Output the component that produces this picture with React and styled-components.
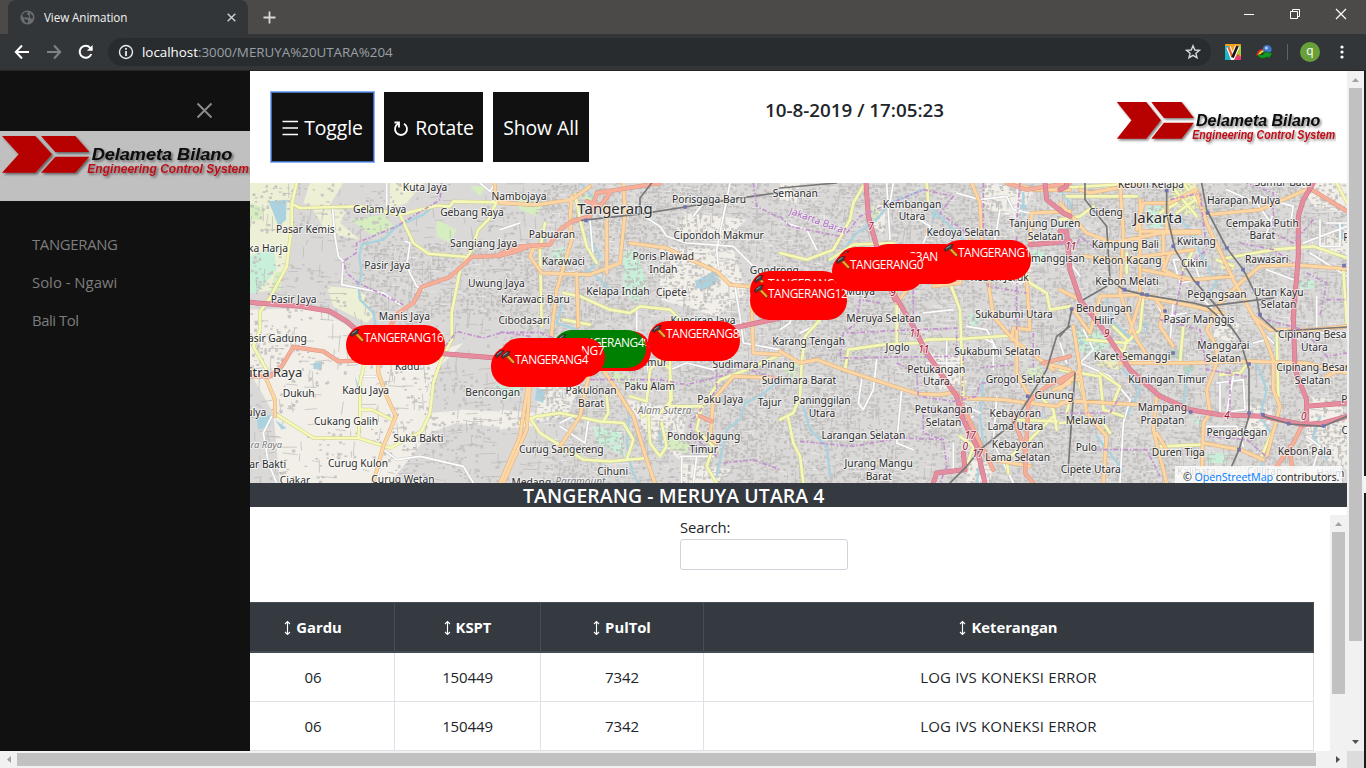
import React from "react";
import styled, { createGlobalStyle, css } from "styled-components";

const UI = '"Open Sans", "Noto Sans", sans-serif';

const Global = createGlobalStyle`
  * { box-sizing: border-box; }
  html, body { margin: 0; height: 100%; overflow: hidden; background: #1c1c1c; }
  body { font-family: ${UI}; color: #212529; }
`;

/* ---------- browser chrome ---------- */
const Window = styled.div`
  width: 1366px; height: 768px; display: flex; flex-direction: column; overflow: hidden;
`;
const TabStrip = styled.div`
  height: 34px; flex: none; background: #4c4a48; display: flex; align-items: stretch; padding-left: 8px;
`;
const Tab = styled.div`
  width: 240px; background: #323639; border-radius: 8px 8px 0 0; display: flex; align-items: center;
  padding: 0 12px 0 12px; color: #f1f1f1; font-size: 11.7px; letter-spacing: -0.1px;
  svg { flex: none; }
`;
const TabTitle = styled.span` flex: 1; padding-left: 9px; white-space: nowrap; margin-top: -1px; `;
const NewTab = styled.div` display: flex; align-items: center; padding-left: 15px; `;
const WindowButtons = styled.div`
  margin-left: auto; display: flex; align-items: center; gap: 34px; padding: 0 19px 6px 0;
`;
const Toolbar = styled.div`
  height: 37px; flex: none; background: #323639; border-bottom: 1px solid #2a2223;
  display: flex; align-items: center; padding: 0 17px 0 14px;
`;
const NavButtons = styled.div` display: flex; gap: 16px; width: 94px; `;
const AddressBar = styled.div`
  width: 1103px; height: 28px; border-radius: 14px; background: #282c2f; display: flex; align-items: center;
  padding: 0 10px; font-size: 13.4px; color: #9aa0a6; white-space: nowrap;
`;
const Url = styled.span`
  flex: 1; padding-left: 8px; letter-spacing: -0.02px;
  b { color: #fff; font-weight: 400; }
`;
const Extensions = styled.div` display: flex; align-items: center; margin-left: 14px; `;
const Divider = styled.i` width: 1px; height: 16px; background: #5f6368; margin: 0 12px 0 14px; `;
const Avatar = styled.div`
  width: 20px; height: 20px; border-radius: 50%; background: #689f38; color: #fff; font-size: 12px;
  line-height: 17px; text-align: center; margin-right: 20px;
`;

/* ---------- page ---------- */
const Viewport = styled.div` flex: 1; min-height: 0; display: flex; `;
const PageColumn = styled.div` width: 1347px; display: flex; flex-direction: column; `;
const Page = styled.div` height: 680px; display: flex; background: #fff; `;
const Sidebar = styled.nav` width: 250px; background: #111; color: #818181; `;
const CloseRow = styled.div`
  height: 60px; display: flex; justify-content: flex-end; align-items: flex-end; padding: 0 37px 12px 0;
`;
const LogoPanel = styled.div` height: 70px; background: #c0c0c0; `;
const SideLinks = styled.div` padding: 24px 0 0 32px; `;
const SideLink = styled.div`
  height: 38px; line-height: 38px; font-size: 14.9px; letter-spacing: ${p => p.$ls || 0}px; color: #7d7d7d;
`;
const Main = styled.main` width: 1097px; display: flex; flex-direction: column; overflow: hidden; `;
const Header = styled.header`
  height: 112px; flex: none; display: flex; align-items: flex-start; padding: 21px 0 0 21px;
`;
const HeaderButton = styled.button`
  height: 70px; width: ${p => p.$w}px; margin: 0 ${p => p.$gap || 0}px 0 0; padding: 1px 0 0; border: 0; background: #111; color: #fff;
  font: 400 19.4px ${UI}; display: flex; align-items: center; justify-content: center; gap: 5px;
  letter-spacing: -0.1px; white-space: nowrap;
  ${p => p.$focused && css`box-shadow: 0 0 0 1px #8fb0ee, inset 0 0 0 1px #3f6cb8; outline: none;`}
`;
const Clock = styled.div`
  margin-left: 176px; width: 350px; padding-top: 4px; font-size: 18.8px; line-height: 28px; font-weight: 600; white-space: nowrap;
`;
const HeaderLogo = styled.div` padding-top: 5px; `;
const MapArea = styled.section` position: relative; height: 300px; flex: none; overflow: hidden; background: #dcdad8; `;
const Pill = styled.div`
  position: absolute; left: ${p => p.$x - 250}px; top: ${p => p.$y - 183}px; width: ${p => p.$w}px; height: ${p => p.$h || 40}px;
  border-radius: 20px; background: ${p => p.$color || "#f00"}; color: #fff; font-size: 11.9px; line-height: 15px; letter-spacing: -0.45px;
  white-space: nowrap; display: flex; padding: 5px 0 0 4px;
  svg { flex: none; margin-top: -1px; }
`;
const Attribution = styled.div`
  position: absolute; right: 5px; bottom: 0; height: 17px; width: 167px; padding: 3px 0 0 8px; background: rgba(255,255,255,.8);
  font-size: 10.7px; line-height: 16px; white-space: nowrap; color: #222; letter-spacing: -0.07px;
  a { color: #007bff; }
`;
const StationTitle = styled.h4`
  margin: 0; height: 24px; flex: none; background: #343a40; color: #fff; font-size: 19.4px; font-weight: 600; line-height: 26px;
  padding-left: 273px; white-space: nowrap; letter-spacing: 0.1px;
`;
const TableArea = styled.section` flex: 1; min-height: 0; margin-top: 8px; display: flex; `;
const TableScroll = styled.div` width: 1080px; overflow: hidden; `;
const SearchBlock = styled.label`
  display: block; width: 168px; height: 87px; margin-left: 430px; font-size: 14.8px; line-height: 24px; letter-spacing: -0.05px;
`;
const SearchInput = styled.input`
  display: block; width: 168px; height: 31px; border: 1px solid #ced4da; border-radius: 3px; background: #fff;
`;
const Row = styled.div`
  width: 1064px; display: grid; grid-template-columns: 145px 146px 163px 610px; font-size: 15px;
`;
const HeadRow = styled(Row)` font-weight: 700; color: #fff; background: #343a40; font-size: 14.8px; `;
const Cell = styled.div`
  height: 49px; border-right: 1px solid #dee2e6; border-bottom: 1px solid #dee2e6; text-align: center; line-height: 48px;
  letter-spacing: -0.12px;
  &:first-child { padding-right: 18px; }
  &:last-child { letter-spacing: 0.15px; }
`;
const HeadCell = styled.div`
  height: 51px; border: solid #454d55; border-width: 1px 1px 2px 0; display: flex; align-items: center; justify-content: center; gap: 5px;
  &:first-child { padding-right: 18px; }
`;

/* ---------- scrollbars ---------- */
const VScroll = styled.div`
  width: 17px; background: #f1f1f1; display: flex; flex-direction: column; align-items: center; flex: none;
  height: ${p => p.$h}px;
`;
const VThumb = styled.div` width: 13px; height: ${p => p.$h}px; background: #c1c1c1; margin-bottom: auto; `;
const HScroll = styled.div` height: 17px; background: #f1f1f1; display: flex; align-items: center; `;
const HThumb = styled.div` width: 1299px; height: 13px; background: #c1c1c1; margin-right: auto; `;
const RightColumn = styled.div` width: 17px; `;
const Corner = styled.div` height: 17px; background: #dcdcdc; `;
const Edge = styled.div` width: 2px; background: linear-gradient(#1b1b1b 405px, #f4f4f4 405px 422px, #1b1b1b 422px); `;

const Arrow = ({ dir, color }) => (
  <svg width="17" height="17" viewBox="0 0 17 17">
    <path d="M5 11 L8.5 7 L12 11Z" fill={color} transform={`rotate(${dir} 8.5 8.5)`} />
  </svg>
);

const Logo = ({ w }) => (
  <svg width={w} height="70" viewBox="0 0 750 210" preserveAspectRatio="none" style={{ display: "block" }}>
    <defs>
      <filter id={"sh" + w} x="-5%" y="-10%" width="115%" height="140%">
        <feDropShadow dx="5" dy="5" stdDeviation="3.5" floodColor="#000" floodOpacity=".5" />
      </filter>
    </defs>
    <g filter={`url(#sh${w})`}>
      <path fill="#b70000" d="M6 15H106L156 70L106 125H6L56 70Z M123 15H226L268 63H166Z M166 77H268L226 125H123Z" />
      <g fontFamily='"Liberation Sans", Arial, sans-serif' fontWeight="700" fontStyle="italic">
        <text x="275" y="86" fontSize="48" textLength="422" lengthAdjust="spacingAndGlyphs" fill="#080808">Delameta Bilano</text>
        <text x="262" y="125" fontSize="36" textLength="485" lengthAdjust="spacingAndGlyphs" fill="#bd1118">Engineering Control System</text>
      </g>
    </g>
  </svg>
);

const Hammer = () => (
  <svg width="14" height="14" viewBox="0 0 14 14">
    <path d="M6 4.5L12.3 11.2" stroke="#7a4a10" strokeWidth="3.4" strokeLinecap="round" />
    <path d="M6 4.5L12.2 11" stroke="#f6a52e" strokeWidth="2.1" strokeLinecap="round" />
    <path d="M.4 6.6L1.4 4L6 .6H9.2L7.8 2.6L8.2 4L6.2 5.6L4.6 4.8L2.4 7.6Z" fill="#3e4346" stroke="#1a1a1a" strokeWidth=".5" />
    <path d="M2.2 4.4L6.4 1.5" stroke="#9fa9ad" strokeWidth=".9" />
  </svg>
);

const SortArrow = () => (
  <svg width="7" height="15" viewBox="0 0 7 15" fill="none" stroke="#fff" strokeWidth="1.1">
    <path d="M3.5 1.5V14.5M1 4L3.5 1.5L6 4M1 12L3.5 14.5L6 12" />
  </svg>
);

/* ---------- map ---------- */
/* Each sheet is drawn at triple scale and placed at its own horizontal offset. */
const SHEETS = [
  {
    dx: 0,
    land: [
      ["#f2efe9", "M0 380L200 375L330 450L520 520L640 480L560 560L540 690L640 680L850 690L850 730L780 735L620 720L540 750L420 900H90L70 690L0 570Z"],
      ["#eef0d5", "M0 0H135L120 180L90 320L0 330ZM180 0H280L230 80L160 60ZM420 0H520L470 60L420 80ZM230 310L340 320L370 400L350 420L250 370ZM190 80H290L270 120L330 170L230 150Z"],
      ["#d6edc0", "M0 60L40 75L30 110H0ZM300 110L400 95L430 130L370 160ZM560 110L620 140L600 180L560 160ZM75 270L100 265L90 320L60 330ZM660 10H710L690 40Z"],
      ["#c8f0d8", "M0 220L70 190L80 260L20 330H0ZM730 610L800 590L820 620L770 650Z"],
      ["#aad3df", "M55 55L110 50L108 110L85 130L70 90ZM190 540L215 535L215 560L190 558ZM20 705L65 695L60 730L25 740ZM75 710L110 735L95 740ZM315 580L330 620L322 625Z"],
    ],
    lines: [
      ["b", "M560 60L520 95L440 130L400 170L335 185L328 220L335 270L325 310L330 350L370 390L380 440"],
      ["p", "M575 0L570 50L440 130L320 180L318 210L280 235L290 270L325 300L460 365"],
      ["p", "M585 490L620 445L700 465L760 448L840 460"],
      ["w", "M248 80L255 160L265 220L280 235L275 305L400 330L450 365M410 0V70M690 0L720 25L735 0M466 175L480 180L470 250L500 310L520 320M330 580H375M400 800L440 830L510 820L640 850L670 900M65 700L40 750L55 840L80 900M375 900L390 860"],
      ["y", "M140 0L125 65L125 130L110 250L60 345L30 385L30 440L10 490L50 560M130 65L150 75L330 70L450 95L560 68L600 70L610 55L740 58M450 95L490 180L535 212L650 222M740 55L715 110L685 140L665 200L630 260L605 390L605 470L570 540L550 600L540 690L515 745L420 795L325 765L190 765L80 695M343 540L330 600V690L325 765M335 680H365L430 712"],
      ["o", "M735 0V30L750 58L840 65M385 540V570L410 640L438 700L400 790L370 900M50 590L75 650V700M840 600L830 740L760 900"],
      ["r", "M840 188L800 205L750 218L665 222L600 282L515 312L490 360L445 390L420 430M0 580H60L95 550L130 492L220 505L265 535L330 533"],
      ["m", "M0 358L150 370L240 385L290 415L330 450L420 500L590 513L740 525"],
    ],
    labels: [
      ["Kuta Jaya", 524, 14], ["Nambojaya", 806, 41], ["Gelam Jaya", 388, 78], ["Gebang Raya", 665, 87], ["Pasar Kemis", 165, 139],
      ["ka Harja", 53, 195], ["Pasir Jaya", 411, 246], ["Sangiang Jaya", 700, 180], ["Uwung Jaya", 738, 301], ["Karawaci Baru", 855, 350],
      ["Cibodasari", 821, 412], ["Pasir Jaya", 130, 349], ["Manis Jaya", 462, 401], ["Pasir Gadung", 72, 467], ["itra Raya", 76, 569, 39],
      ["Dukuh", 145, 632], ["Kadu", 471, 549], ["Kadu Jaya", 346, 623], ["ulya", 18, 687], ["Cukang Galih", 287, 716], ["ra Raya", 48, 784, 28, "i"],
      ["Suka Bakti", 504, 767], ["Curug Kulon", 323, 840], ["ar Bakti", 52, 843], ["Ciakar", 134, 893], ["Curug Wetan", 458, 890], ["Bencongan", 727, 627],
    ],
  },
  {
    dx: 250,
    land: [
      ["#f2efe9", "M120 590L240 600L200 700L0 740V680L110 690ZM480 190L700 200L740 330L650 400L480 350ZM560 90L740 110L660 180L520 150ZM380 650L560 680L540 830L440 750ZM540 840L700 860L650 900H540Z"],
      ["#c8f0d8", "M160 200L190 190L210 225L180 250L155 230ZM370 210L410 200L440 300L410 360L370 330ZM280 730L360 740L375 820L290 780Z"],
      ["#d6edc0", "M50 40L130 60L110 100L60 80ZM240 40L290 30L280 70ZM500 760L570 780L560 810L510 800ZM330 560L420 590L400 620L340 590ZM120 460L170 470L160 520Z"],
      ["#aad3df", "M585 295L640 265L660 280L645 305L610 320L590 315ZM110 615L135 620L130 660L105 650ZM475 740L490 740L485 800L475 795ZM210 700L240 690L240 715Z"],
    ],
    lines: [
      ["b", "M240 0L285 50L275 100L270 170L300 220L270 260L230 290M165 330L185 370L170 420L230 440M280 270L340 330M390 680L380 780L395 860L415 900M840 590L780 640L735 660L720 710L680 740L650 880"],
      ["p", "M760 0L770 70L840 105M270 590L480 590L560 605L680 575L700 545L840 590M0 448H120L160 465M650 540L650 620L570 720L580 760L650 820M670 840L760 830L840 860"],
      ["w", "M270 110L280 230M0 140L60 120M440 105L480 130L500 160L560 180L700 190L760 250M690 0L650 200L655 250M705 310L720 400L730 480L840 500M410 370V440M430 470L450 600L430 700M180 720L220 700L265 710L255 780L180 730M510 560L560 540L640 560L700 510M540 820H640M545 820V900M590 820L580 900M610 60L580 100M375 0V50"],
      ["y", "M135 120L120 200L125 430M225 35L235 80L240 110L260 190L290 240M190 330L240 340L330 380L390 390L420 370L510 380L560 430M60 720L110 700L180 690L300 715L370 720L400 770L380 830M90 705L120 750L250 830L330 835L440 825M320 640L325 690L310 715M390 640L440 655L450 560L480 530L510 560L515 650L480 690M425 700L445 690L450 780L480 820L500 790L485 720M510 530V670L605 670L590 740L640 790L620 850L650 900M590 700L660 590L740 560L830 520M190 410L270 425"],
      ["o", "M0 60L110 65L215 50L270 10M370 0L375 90L360 240L270 275L125 270L90 220L100 195L130 190M215 40L210 110L215 170L170 320L155 450L150 560M320 70L320 270M390 180L500 195L560 225L650 265L690 305L840 320M230 270L235 430M280 520L330 590L400 700L440 830L465 900M0 900L60 760L85 600M270 560L240 700L180 790M755 370L760 510L840 515M840 585L700 580L640 650L630 770L650 780"],
      ["r", "M0 213L60 190L150 185L180 140L215 115L270 100L290 30L480 0M330 30L300 70L260 55M600 700L635 715"],
      ["m", "M700 435L840 405L940 345"],
      ["t", "M245 112L430 92L555 72L690 50L840 28M455 0L420 45V95"],
      ["s", "M258 112h.1M555 72h.1"],
    ],
    labels: [
      ["Tangerang", 344, 78, 45], ["Porisgaga Baru", 626, 48], ["Pabuaran", 155, 154], ["Cipondoh Makmur", 655, 158], ["Karawaci", 189, 234],
      ["Poris Plawad", 489, 220], ["Indah", 489, 259], ["Kelapa Indah", 353, 325], ["Cipete", 513, 329], ["Kunciran Jaya", 608, 413],
      ["Gondrong", 822, 262], ["Sudimara Pinang", 760, 545], ["Paku Alam", 448, 611], ["Paku Jaya", 660, 650], ["Alam Sutera", 493, 682, 30, "i"],
      ["Pakulonan", 272, 623], ["Barat", 272, 661], ["Pondok Jagung", 610, 760], ["Timur", 610, 798], ["Timur", 458, 537], ["Curug Sangereng", 183, 798],
      ["Cihuni", 337, 864], ["Medang", 93, 898], ["Paramount", 240, 896, 30, "i"], ["Sudimara Barat", 896, 591], ["Tajur", 808, 657],
      ["Karang Tengah", 925, 475], ["Semanan", 885, 31],
    ],
  },
  {
    dx: 530,
    land: [
      ["#f2efe9", "M0 0H60L50 60L0 50ZM280 60L320 70L310 150L280 130ZM640 210L760 230L740 310L640 290ZM440 510L540 520L560 600L480 620ZM620 0L760 20L720 110L600 70ZM560 830L640 840L630 900H560Z"],
      ["#c8f0d8", "M565 395L590 390L600 425L570 430ZM760 200L800 210L790 245L750 235Z"],
      ["#d6edc0", "M275 70L300 75L290 120L280 115ZM740 560L780 550L800 590L750 600ZM420 480L450 520L420 530ZM0 550L60 530L40 590Z"],
      ["#aad3df", "M720 65H740L738 90H722ZM770 100L800 110L790 125ZM455 85L470 90L465 110L455 105Z"],
    ],
    lines: [
      ["b", "M440 0L450 70L500 120L560 180M430 20L330 60L290 110L230 150L190 200L150 240M610 590L600 700L610 780L590 900M70 670L90 740L140 790L150 880M730 30V100M400 290L330 310"],
      ["p", "M0 100L30 130L180 160M200 150L240 100L430 20L520 40L480 90L560 150M400 290V440L530 435V520L180 525L190 450L230 420L240 350L300 360M405 440L200 450M350 540L410 570L415 640L520 655L590 640L600 600L700 600M600 555L700 545M60 775L220 790L360 765L490 770L500 850L480 900M550 520L545 690L430 680L430 750L490 770M710 160V440M610 180L625 310L740 330M610 0V180M720 0L710 120M760 450V560M560 200L640 200"],
      ["w", "M20 120L80 140L110 200M320 0L330 170M340 0L330 60M60 280L30 420L0 440M290 530L280 620L250 680L235 660L245 590M130 340L120 420L60 450M360 340L350 480M430 390L520 380M365 620L350 780L400 800M500 470V560M560 430L620 440L660 520M600 460L640 480V560M440 540H540M540 660L600 690M580 700L540 720M520 780V860M650 640L640 780L700 900M400 100L450 130L430 180M660 80L640 200M530 30L600 50L680 40L700 80L750 90M0 360L100 360M380 200L340 180"],
      ["y", "M255 0L220 60L210 110L160 200L80 230L0 210M160 330L120 410L75 460L65 540L60 640L40 690L0 710M195 560L205 500L310 485L420 480L440 470L540 468L690 458M350 480V360M510 300L540 380L550 640M25 705L40 780L60 820L70 900M340 180L220 185L150 230M560 850L580 790L540 760M685 870L680 830L750 770L820 700M440 0L445 60M700 180L750 300L800 330L810 380L870 370M780 640L820 680L830 740M700 710L830 715M860 690L870 650"],
      ["o", "M575 0L600 60L605 160L625 300L640 400L700 470L780 530L820 560M570 170L540 300L460 310M0 505L60 540L110 530L190 560L280 590L410 632L480 635L510 630M530 645L670 650L740 660L830 670L870 650M740 290L750 440L700 435L695 470M330 200L350 360L380 320M750 180L755 90L870 85M710 440V570L760 660M790 540L870 560M700 0L760 20L870 20M640 830L750 850M820 620L870 600"],
      ["r", "M680 0L740 20L870 0M870 520L790 540M745 660L735 870L760 900M870 575L800 610L740 660M530 630L600 780L640 860M700 700L740 820"],
      ["m", "M258 0L265 100L290 190L340 330L400 430L440 510L530 640L545 700L590 790L615 900M550 810L555 860L470 870L460 900M795 0L800 50L850 90L870 100M750 185L870 175M320 290L345 350"],
      ["t", "M0 15L170 0M870 430L830 460L800 560L745 650L700 720L600 800L560 850L510 900"],
      ["s", "M743 640h.1"],
    ],
    labels: [
      ["Kembangan", 395, 63], ["Utara", 395, 101], ["Kedoya Selatan", 549, 147], ["Tanjung Duren", 793, 121], ["Selatan", 796, 159],
      ["Meruya Selatan", 310, 407], ["Mulya", 240, 325], ["Joglo", 352, 492], ["Sukabumi Utara", 701, 394], ["Sukabumi Selatan", 651, 506],
      ["Petukangan", 468, 558], ["Utara", 468, 596], ["Grogol Selatan", 723, 588], ["Gunung", 821, 638], ["Kebayoran", 705, 692],
      ["Lama Utara", 705, 730], ["Paninggilan", 125, 652], ["Utara", 125, 690], ["Petukangan", 490, 680], ["Selatan", 490, 718],
      ["Larangan Selatan", 249, 757], ["Kebayoran", 712, 784], ["Lama Selatan", 712, 822], ["Jurang Mangu", 295, 842], ["Barat", 295, 880],
      ["manggisan", 833, 226], ["Kebon Jeruk", 658, 283], ["7", 272, 131, 30, "n"], ["9", 338, 330, 30, "n"], ["11", 404, 452, 30, "n"],
      ["11", 430, 499, 30, "n"], ["17", 570, 757, 30, "n"], ["0", 555, 792, 30, "n"], ["17", 592, 812, 30, "n"],
    ],
  },
  {
    dx: 810,
    land: [
      ["#f2efe9", "M480 400L540 420L520 480L460 460ZM740 640L820 650L861 690V860L740 800ZM780 150L861 140V220L780 210ZM560 660L640 680L620 760L560 740ZM720 0H861V90L760 70Z"],
      ["#c8f0d8", "M262 70H320V135H262ZM45 440L100 430L150 480L110 520L50 500ZM705 300L760 290L765 315L720 322ZM390 705L430 715L425 735ZM440 810H500V840H440Z"],
      ["#eeeebb", "M330 0H410L420 70L380 100L340 60ZM110 520H190L180 560L110 550ZM480 235L525 240L520 265L485 262Z"],
      ["#b9d5c0", "M365 545L400 530L405 560L375 575ZM210 185L240 190L230 210ZM320 500H370V525H325Z"],
      ["#aad3df", "M830 125L850 120L850 170L835 165ZM250 415L265 420L262 450L250 445ZM60 470L75 478L66 490Z"],
    ],
    lines: [
      ["b", "M0 20L30 60L20 150M140 350L160 420L230 480M350 100L400 150L420 210L470 300L440 340M190 560L240 620L200 700M385 560L370 660M590 540L620 620L600 700L640 760L590 880M110 760L180 850L180 900M780 700L760 760L800 830"],
      ["p", "M0 180L50 190L60 160L110 200M330 50L420 30L440 200L370 260L340 420M540 180L640 200L700 240M300 410L420 440L440 560L560 580M620 410L730 440L800 520L860 510M0 690L150 690L180 640M100 800L260 800L300 880M510 560V690M760 110L700 180L640 150V30L560 0M740 270L800 300L780 400M440 760L560 770L630 830M800 350H861"],
      ["w", "M600 40L700 70L690 130M640 90L620 150M500 20L590 60L640 130M730 180L861 130M750 210L861 280M620 260L700 290M340 230H400L420 290L360 300ZM280 340L320 420M340 350L330 480M320 400L380 390M420 340L480 400L520 440M70 440L100 500L60 540L150 580L210 650L190 720L180 900M470 600L550 590L555 680L480 690L480 600M520 580L500 690M440 730L530 730L550 790M610 450L640 480M580 480L620 470M740 760L780 790L760 850M800 120H861M780 110V190H840V120M770 340V450H850M0 480L20 540M30 240L60 280"],
      ["y", "M0 15L250 0M20 40H230M330 50L420 30M340 15L410 100M350 90L420 40M370 0L430 80M300 90L350 60M0 110L60 100L100 70M500 225L640 200L760 190L861 225M520 250L470 230M250 340L240 440L200 480L80 470M370 430L360 540L230 540L170 490M60 570L120 580L130 680L190 700M120 570L180 610L160 660M0 720L90 710L130 720L150 750M830 0L861 60M850 260L861 430M640 740L600 830M300 790L430 785M200 210V270M400 200L370 260M160 430L200 470L190 510M480 575L540 570L560 545M650 450L655 640M0 560L50 570L70 640"],
      ["o", "M60 20L90 30L250 0M0 60L80 150L160 180L300 150L420 150M240 50V350L210 450M320 70V150M250 60H330L410 20M410 30L440 120L520 290L580 400L610 450L640 530L640 620L660 670L620 820M440 95L600 80L740 20M480 360L540 300L600 250L700 245L861 258M190 150L180 330L230 470L270 530M240 145H420M310 150V240M70 220L180 230L400 200M250 260L400 290L520 280M250 340L400 370L490 390M330 210L310 260L370 290M180 540L380 540L560 535L740 540L860 570M470 540L440 620L450 690L430 720L425 900M0 660L60 655L230 665M290 640L280 740L310 860L320 900M40 380L90 450L120 340L250 335M40 430L60 560L0 620M60 570L80 690L140 760L130 900M0 320L60 350M250 60L230 140M430 780L540 800L610 830M480 360L440 440L470 490V540M580 400L630 440L760 440L861 430M340 490L300 430L310 380L280 340M180 0L190 150M290 750L320 800M800 580L861 550M0 590H60"],
      ["r", "M755 20L861 85M730 720L700 780L650 850M690 790L700 900M0 600L40 570"],
      ["m", "M0 145L20 145L30 260L60 350L130 440L210 560L300 640L390 680L480 695L610 700L730 725L790 720L861 700M760 0L730 50L715 100L715 220L700 400L705 560L740 650V720M740 670L861 660M20 0V10L0 20"],
      ["t", "M75 0V50L140 130L150 290L190 320L250 335L400 360L440 370L640 345M440 370L520 440M320 20V90L345 200L400 290L470 370L540 470L567 560L567 700L537 800L515 850M425 0L440 80L500 195L550 260L590 340L600 400L650 445L861 432M70 350L140 310M0 460L25 430L35 380M45 570L25 850M610 700L690 723L790 730L861 700"],
      ["s", "M320 22h.1M443 90h.1M340 190h.1M501 195h.1M413 300h.1M549 260h.1M194 320h.1M246 333h.1M261 336h.1M315 384h.1M600 395h.1M339 510h.1M35 378h.1M567 543h.1M392 687h.1M567 690h.1M609 695h.1M686 722h.1M791 729h.1M537 800h.1M852 248h.1"],
    ],
    labels: [
      ["Kebon Kelapa", 272, 4], ["Cideng", 137, 87], ["Jakarta", 292, 104, 45], ["Harapan Mulya", 550, 53], ["Sumur Batu", 668, -2],
      ["Cempaka Putih", 606, 120], ["Barat", 606, 158], ["Kampung Bali", 195, 185], ["Kwitang", 408, 174], ["Kebon Kacang", 200, 232],
      ["Cikini", 401, 240], ["Rawasari", 619, 228], ["Kebon Melati", 200, 294], ["Pegangsaan", 470, 333], ["Utan Kayu", 655, 327],
      ["Selatan", 655, 365], ["Bendungan", 131, 375], ["Hilir", 131, 412], ["Pasar Manggis", 416, 409], ["Cipinang Besar", 762, 455],
      ["Utara", 762, 494], ["Manggarai", 489, 487], ["Selatan", 489, 525], ["Karet Semanggi", 215, 519], ["Cipinang Besar", 757, 553],
      ["Selatan", 757, 592], ["Kuningan Timur", 320, 589], ["Mampang", 306, 674], ["Prapatan", 306, 712], ["Melawai", 76, 713],
      ["Pulo", 78, 792], ["Pengadegan", 530, 747], ["Duren Tiga", 354, 808], ["Kebon Pala", 733, 806], ["Cipete Utara", 91, 860],
      ["Kalibata", 408, 864], ["Cililitan", 613, 864], ["Halim", 810, 872], ["P", 852, 650], ["C", 853, 741], ["F", 857, 163],
      ["11", 31, 191, 30, "n"], ["9", 139, 451, 30, "n"], ["4", 500, 697, 30, "n"], ["0", 730, 700, 30, "n"],
    ],
  },
];

const ROAD = {
  b: ["#aad3df", 7], p: ["#c391cf", 5], w: ["#fff", 5, "#c9c9c9"], y: ["#f5f8b8", 8, "#cdd08a"], o: ["#fcd6a4", 9, "#dfb078"],
  r: ["#f7af99", 10, "#d99683"], m: ["#e58d9f", 12, "#cd7284"], t: ["#777", 5], s: ["#7374ae", 11],
};
const ORDER = ["b", "w", "y", "o", "r", "m", "t", "p", "s"];

/* Deterministic city blocks and lanes */
function cityTexture() {
  let seed = 7919;
  const rnd = () => ((seed = (seed * 16807) % 2147483647) / 2147483647);
  let blocks = "", dark = "", lanes = "", pale = "";
  for (let y = 0; y < 300; y += 4) {
    for (let x = 0; x < 1097; x += 4) {
      const wave = Math.sin(x / 31 + Math.sin(y / 19) * 2) * Math.cos(y / 27 + x / 83);
      const rural = x < 290 && (y > 130 || x < 110 || y < 60);
      const density = rural ? 0.12 + wave * 0.25 : 0.66 + wave * 0.3;
      const px = (x + rnd() * 3).toFixed(1), py = (y + rnd() * 3).toFixed(1);
      if (rnd() < density) blocks += `M${px} ${py}h${(1.5 + rnd() * 2.5).toFixed(1)}v${(1 + rnd() * 2.6).toFixed(1)}h-3z`;
      if (rnd() < density * 0.3) dark += `M${px} ${py}h${(1 + rnd() * 1.6).toFixed(1)}v1.3h-1.6z`;
      if (rnd() < (rural ? 0.07 : 0.14)) {
        const horizontal = rnd() < 0.5, len = 5 + rnd() * 13, skew = (rnd() - 0.5) * 4;
        lanes += horizontal ? `M${px} ${py}l${len.toFixed(1)} ${skew.toFixed(1)}` : `M${px} ${py}l${skew.toFixed(1)} ${len.toFixed(1)}`;
      }
      if (!rural && rnd() < 0.08) pale += `M${px} ${py}h${(3 + rnd() * 7).toFixed(1)}v${(rnd() * 5).toFixed(1)}`;
    }
  }
  return { blocks, dark, lanes, pale };
}
const CITY = cityTexture();

const CityMap = () => (
  <svg width="1097" height="300" viewBox="0 0 1097 300" style={{ display: "block" }}>
    <rect width="1097" height="300" fill="#dad9d8" />
    {SHEETS.map(s => (
      <g key={s.dx} transform={`translate(${s.dx} 0) scale(.33333)`}>
        {s.land.map(([c, d], i) => <path key={i} d={d} fill={c} />)}
      </g>
    ))}
    <path d={CITY.blocks} fill="#c3c1bf" fillOpacity=".85" />
    <path d={CITY.dark} fill="#b7b5b3" />
    <path d={CITY.lanes} fill="none" stroke="#bcbab8" strokeWidth=".7" />
    <path d={CITY.pale} fill="none" stroke="#efeeec" strokeWidth=".7" />
    {ORDER.map(k => {
      const [color, width, casing] = ROAD[k];
      const draw = (stroke, w, id) => SHEETS.map(s => (
        <g key={id + s.dx} transform={`translate(${s.dx} 0) scale(.33333)`} fill="none" stroke={stroke} strokeWidth={w}
          strokeLinejoin="round" strokeLinecap={k === "s" ? "square" : k === "p" ? "butt" : "round"} strokeDasharray={k === "p" ? "14 6 4 6" : undefined}>
          {s.lines.filter(l => l[0] === k).map((l, i) => <path key={i} d={l[1]} />)}
        </g>
      ));
      return <g key={k}>{casing && draw(casing, width + 3, "c")}{draw(color, width, "f")}</g>;
    })}
    <text transform="translate(567 41) rotate(20)" textAnchor="middle" fontFamily='"Noto Sans", sans-serif' fontSize="10" fill="#b06fc0"
      stroke="#fff" strokeOpacity=".6" strokeWidth="1.5" paintOrder="stroke">Jakarta Barat</text>
    {SHEETS.map(s => (
      <g key={s.dx} transform={`translate(${s.dx} 0) scale(.33333)`} fontFamily='"Noto Sans", sans-serif' textAnchor="middle"
        stroke="#fff" strokeOpacity=".65" strokeWidth="6" strokeLinejoin="round" paintOrder="stroke">
        {s.labels.map(([t, x, y, size = 30.8, kind], i) => (
          <text key={i} x={x + 1} y={y + size * 0.35} fontSize={size} fill={kind === "n" ? "#a01830" : kind === "i" ? "#777" : "#2d2d2d"}
            fontStyle={kind ? "italic" : "normal"}>{t}</text>
        ))}
      </g>
    ))}
  </svg>
);

const PILLS = [
  { x: 346, y: 325, w: 99, t: "TANGERANG16" },
  { x: 555, y: 331, w: 96, t: "TANGERANG41" },
  { x: 553, y: 330, w: 93, h: 38, t: "TANGERANG4", color: "#008000" },
  { x: 513, y: 338, w: 92, h: 39, t: "TANGERANG7" },
  { x: 500, y: 338, w: 84, h: 46 },
  { x: 491, y: 346, w: 92, h: 41, t: "TANGERANG5" },
  { x: 497, y: 347, w: 92, t: "TANGERANG4" },
  { x: 648, y: 321, w: 92, t: "TANGERANG8" },
  { x: 750, y: 271, w: 93, t: "TANGERANG9" },
  { x: 750, y: 281, w: 97, h: 39, t: "TANGERANG12" },
  { x: 868, y: 244, w: 97, t: "TANG3AN" },
  { x: 836, y: 247, w: 72, t: "TANG" },
  { x: 832, y: 252, w: 92, h: 39, t: "TANGERANG0" },
  { x: 940, y: 240, w: 91, t: "TANGERANG1" },
];

const ROWS = [
  ["06", "150449", "7342", "LOG IVS KONEKSI ERROR"],
  ["06", "150449", "7342", "LOG IVS KONEKSI ERROR"],
];

const Icon = ({ w = 16, h = w, color = "#fff", sw = 1.8, children, box }) => (
  <svg width={w} height={h} viewBox={box || `0 0 ${w} ${h}`} fill="none" stroke={color} strokeWidth={sw}>{children}</svg>
);

export default function App() {
  return (
    <Window>
      <Global />
      <TabStrip>
        <Tab>
          <svg width="15" height="15" viewBox="0 0 15 15">
            <circle cx="7.5" cy="7.5" r="7" fill="#6a6e72" />
            <path d="M2 5L5 2L8 2.2L7 4.5L9.5 6L8 8L5.5 7L4 8.2ZM10 3L13 6L12.5 9L10 8ZM4 9L7 9.3L8.5 11L7 13.2L5 12Z" fill="#34383b" />
          </svg>
          <TabTitle>View Animation</TabTitle>
          <Icon w={9} color="#cfd1d3" sw={1.4}><path d="M.7.7L8.3 8.3M8.3.7L.7 8.3" /></Icon>
        </Tab>
        <NewTab><Icon w={13} color="#d8d8d8"><path d="M6.5 .5V12.5M.5 6.5H12.5" /></Icon></NewTab>
        <WindowButtons>
          <Icon w={12} sw={1}><path d="M1 6.5H11" /></Icon>
          <Icon w={12} sw={1}><path d="M1.5 3.5H8.5V10.5H1.5ZM3.5 3.5V1.5H10.5V8.5H8.5" /></Icon>
          <Icon w={12} sw={1.2}><path d="M1 1L11 11M11 1L1 11" /></Icon>
        </WindowButtons>
      </TabStrip>
      <Toolbar>
        <NavButtons>
          <Icon sw={2}><path d="M15 8H2M8 1.5L1.8 8L8 14.5" /></Icon>
          <Icon sw={2} color="#7f8387"><path d="M1 8H14M8 1.5L14.2 8L8 14.5" /></Icon>
          <Icon sw={2}><path d="M13.3 10A6 6 0 1 1 12.2 3.8L14 5.7" /><path d="M14.6 1V6.8H8.9Z" fill="#fff" stroke="none" /></Icon>
        </NavButtons>
        <AddressBar>
          <Icon color="#e8eaed" sw={1.4}><circle cx="8" cy="8" r="6.5" /><path d="M8 7V12M8 4V5.8" strokeWidth="1.8" /></Icon>
          <Url><b>localhost</b>:3000/MERUYA%20UTARA%204</Url>
          <Icon color="#d5d7d9" sw={1.4}><path d="M8 1.8L9.8 6L14.4 6.3L10.9 9.2L12 13.7L8 11.3L4 13.7L5.1 9.2L1.6 6.3L6.2 6Z" /></Icon>
        </AddressBar>
        <Extensions>
          <svg width="16" height="16" viewBox="0 0 16 16">
            <rect width="16" height="16" rx="1" fill="#f5a11b" /><path d="M0 2H4L7 16H0Z" fill="#19b6c9" /><path d="M13 2H16V11H12Z" fill="#a9c93c" />
            <path d="M9 16L13 10L16 13V16Z" fill="#e83b78" />
            <path d="M3.5 3L7.5 13.5L12.5 2" fill="none" stroke="#fff" strokeWidth="4.6" /><path d="M3.5 3L7.5 13" stroke="#e8642c" strokeWidth="2.3" /><path d="M7.5 13.5L12.5 2" stroke="#161616" strokeWidth="2.7" />
          </svg>
          <svg width="17" height="16" viewBox="0 0 17 16" style={{ marginLeft: 15 }}>
            <path d="M1.5 11.5A7 5 0 0 1 8 5.5" fill="none" stroke="#e22424" strokeWidth="1.6" />
            <path d="M3 12A6 5 0 0 1 8.5 7" fill="none" stroke="#f2dd22" strokeWidth="2.2" />
            <circle cx="11.2" cy="5.4" r="4.4" fill="#3f78c8" /><circle cx="10.4" cy="4" r="1.6" fill="#b4cdec" />
            <path d="M3 10.5Q8 12 8.5 7.5L16.5 9.5L12.5 14.5L11.5 12.8Q6 16 2 12.4Z" fill="#159a22" stroke="#0b4a11" strokeWidth=".6" />
          </svg>
          <Divider />
          <Avatar>q</Avatar>
          <svg width="4" height="14" viewBox="0 0 4 14" fill="#fff"><circle cx="2" cy="2" r="1.6" /><circle cx="2" cy="7" r="1.6" /><circle cx="2" cy="12" r="1.6" /></svg>
        </Extensions>
      </Toolbar>
      <Viewport>
        <PageColumn>
          <Page>
            <Sidebar>
              <CloseRow><Icon w={17} color="#8a8a8a" sw={2}><path d="M1.5 1.5L15.5 15.5M15.5 1.5L1.5 15.5" /></Icon></CloseRow>
              <LogoPanel><Logo w={250} /></LogoPanel>
              <SideLinks>
                <SideLink $ls={-0.33}>TANGERANG</SideLink>
                <SideLink $ls={0}>Solo - Ngawi</SideLink>
                <SideLink $ls={-0.45}>Bali Tol</SideLink>
              </SideLinks>
            </Sidebar>
            <Main>
              <Header>
                <HeaderButton $w={103} $gap={10} $focused>
                  <Icon w={17} h={16} sw={1.4}><path d="M.5 1.5H16M.5 8H16M.5 14.5H16" /></Icon>Toggle
                </HeaderButton>
                <HeaderButton $w={99} $gap={10}>
                  <Icon w={17} h={16} sw={1.8}><path d="M11 3.8A6 6 0 1 1 5 3.8M1.5 2.5H6V7.5" /></Icon>Rotate
                </HeaderButton>
                <HeaderButton $w={96}>Show All</HeaderButton>
                <Clock>10-8-2019 / 17:05:23</Clock>
                <HeaderLogo><Logo w={221} /></HeaderLogo>
              </Header>
              <MapArea>
                <CityMap />
                {PILLS.map((p, i) => (
                  <Pill key={i} $x={p.x} $y={p.y} $w={p.w} $h={p.h} $color={p.color}>{p.t && <Hammer />}{p.t}</Pill>
                ))}
                <Attribution>© <a>OpenStreetMap</a> contributors.</Attribution>
              </MapArea>
              <StationTitle>TANGERANG - MERUYA UTARA 4</StationTitle>
              <TableArea>
                <TableScroll>
                  <SearchBlock>Search:<SearchInput /></SearchBlock>
                  <HeadRow>
                    {["Gardu", "KSPT", "PulTol", "Keterangan"].map(h => <HeadCell key={h}><SortArrow />{h}</HeadCell>)}
                  </HeadRow>
                  {ROWS.map((r, i) => <Row key={i}>{r.map((c, j) => <Cell key={j}>{c}</Cell>)}</Row>)}
                </TableScroll>
                <VScroll $h={236}><Arrow dir={0} color="#a3a3a3" /><VThumb $h={162} /></VScroll>
              </TableArea>
            </Main>
          </Page>
          <HScroll><Arrow dir={270} color="#a3a3a3" /><HThumb /><Arrow dir={90} color="#505050" /></HScroll>
        </PageColumn>
        <RightColumn>
          <VScroll $h={680}><Arrow dir={0} color="#a3a3a3" /><VThumb $h={553} /><Arrow dir={180} color="#505050" /></VScroll>
          <Corner />
        </RightColumn>
        <Edge />
      </Viewport>
    </Window>
  );
}
